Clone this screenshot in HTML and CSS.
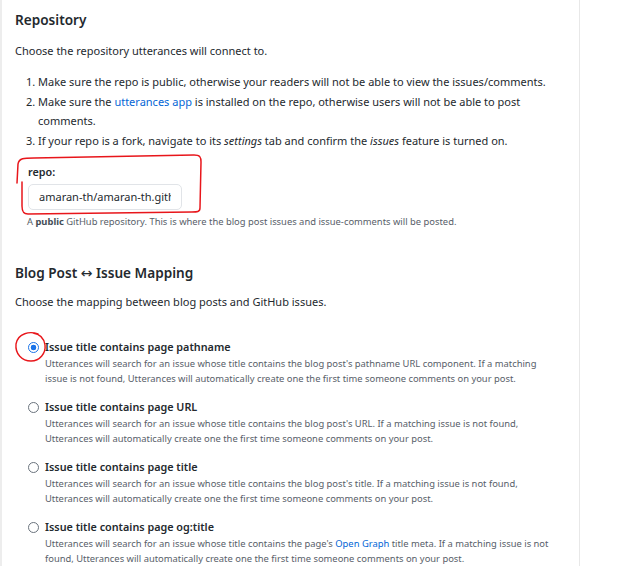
FILE: index.html
```html
<!DOCTYPE html>
<html>
<head>
<meta charset="utf-8">
<link rel="stylesheet" href="styles.css">
</head>
<body>
<div class="page">
  <h3 class="heading">Repository</h3>
  <p class="lead">Choose the repository utterances will connect to.</p>
  <ol class="steps">
    <li>Make sure the repo is public, otherwise your readers will not be able to view the issues/comments.</li>
    <li>Make sure the <a href="#">utterances app</a> is installed on the repo, otherwise users will not be able to post comments.</li>
    <li>If your repo is a fork, navigate to its <em>settings</em> tab and confirm the <em>issues</em> feature is turned on.</li>
  </ol>
  <div class="repo-field">
    <label class="field-label">repo:</label>
    <div class="input"><span class="input-text">amaran-th/amaran-th.github.io</span></div>
  </div>
  <p class="note">A <strong>public</strong> GitHub repository. This is where the blog post issues and issue-comments will be posted.</p>

  <h3 class="heading heading-2">Blog Post <span class="arrow">↔</span> Issue Mapping</h3>
  <p class="lead lead-2">Choose the mapping between blog posts and GitHub issues.</p>

  <div class="options">
    <div class="option">
      <span class="radio checked"></span>
      <div class="option-body">
        <div class="option-title">Issue title contains page pathname</div>
        <div class="option-desc">Utterances will search for an issue whose title contains the blog post's pathname URL component. If a matching issue is not found, Utterances will automatically create one the first time someone comments on your post.</div>
      </div>
    </div>
    <div class="option">
      <span class="radio"></span>
      <div class="option-body">
        <div class="option-title">Issue title contains page URL</div>
        <div class="option-desc">Utterances will search for an issue whose title contains the blog post's URL. If a matching issue is not found, Utterances will automatically create one the first time someone comments on your post.</div>
      </div>
    </div>
    <div class="option">
      <span class="radio"></span>
      <div class="option-body">
        <div class="option-title">Issue title contains page title</div>
        <div class="option-desc">Utterances will search for an issue whose title contains the blog post's title. If a matching issue is not found, Utterances will automatically create one the first time someone comments on your post.</div>
      </div>
    </div>
    <div class="option">
      <span class="radio"></span>
      <div class="option-body">
        <div class="option-title">Issue title contains page og:title</div>
        <div class="option-desc">Utterances will search for an issue whose title contains the page's <a href="#">Open Graph</a> title meta. If a matching issue is not found, Utterances will automatically create one the first time someone comments on your post.</div>
      </div>
    </div>
  </div>

  <svg class="scribble" width="192" height="70" viewBox="0 0 192 70">
    <path d="M3 33 L4 14 C5 8, 10 8, 20 8 L180 5 C186 5, 187 7, 187 12 L186 58 C186 62, 183 62, 178 62 L14 64 C9 64, 8 61, 8 56 L8 32" fill="none" stroke="#e8161b" stroke-width="1.5" stroke-linecap="round" stroke-linejoin="round"/>
  </svg>
  <svg class="circle-mark" width="36" height="34" viewBox="0 0 36 34">
    <path d="M26 4 C18 1, 6 3, 4 14 C3 24, 10 31, 19 31 C28 31, 34 23, 33 15 C32 8, 28 4, 21 3" fill="none" stroke="#e8161b" stroke-width="1.4" stroke-linecap="round"/>
  </svg>
</div>
</body>
</html>
```
FILE: styles.css
```css
html, body {
  margin: 0;
  padding: 0;
  background: #fff;
  overflow: hidden;
}
body {
  font-family: "Noto Sans", "Open Sans", sans-serif;
  color: #24292e;
  font-size: 11px;
}
.page {
  position: relative;
  width: 550px;
  height: 566px;
  border-left: 2px solid #ededed;
  border-right: 1px solid #e8e8e8;
  padding-left: 13px;
  padding-right: 14px;
  box-sizing: content-box;
}
.heading {
  margin: 0;
  padding-top: 10px;
  font-size: 13.6px;
  font-weight: 600;
  line-height: 20px;
}
.heading-2 {
  padding-top: 34.5px;
}
.arrow {
  font-family: "DejaVu Sans", sans-serif;
  font-weight: 400;
  font-size: 14px;
  line-height: 0;
}
.lead {
  margin: 11px 0 0;
  line-height: 20px;
}
.lead-2 {
  margin-top: 9px;
}
.steps {
  margin: 11px 0 0;
  padding-left: 23px;
  line-height: 19.5px;
}
a {
  color: #0366d6;
  text-decoration: none;
}
.repo-field {
  margin: 14px 0 0 13px;
  display: flex;
  flex-direction: column;
  gap: 4px;
}
.field-label {
  font-weight: 600;
  font-size: 10.8px;
  line-height: 16px;
}
.input {
  width: 154px;
  height: 26px;
  box-sizing: border-box;
  border: 1px solid #e1e4e8;
  border-radius: 5px;
  padding: 0 10px;
  line-height: 24px;
  font-size: 11px;
  color: #24292e;
}
.input-text {
  display: block;
  white-space: nowrap;
  overflow: hidden;
}
.note {
  margin: 3.5px 0 0 12px;
  font-size: 9.4px;
  color: #586069;
  line-height: 15px;
}
.note strong {
  color: #444d56;
}
.options {
  margin-top: 26px;
  display: flex;
  flex-direction: column;
  gap: 12px;
}
.option {
  display: flex;
  align-items: flex-start;
  gap: 6px;
  padding-left: 13px;
}
.radio {
  width: 9px;
  height: 9px;
  border: 1px solid #6a737d;
  border-radius: 50%;
  margin-top: 3.5px;
  flex: none;
  box-sizing: content-box;
}
.radio.checked {
  border-color: #1a73e8;
  background: radial-gradient(circle, #1a73e8 0 2.6px, #fff 3.1px);
}
.option-body {
  width: 515px;
}
.option-title {
  font-weight: 600;
  font-size: 10.8px;
  line-height: 18px;
}
.option-desc {
  font-size: 9.4px;
  color: #586069;
  line-height: 15px;
}
.scribble {
  position: absolute;
  left: 12px;
  top: 150px;
}
.circle-mark {
  position: absolute;
  left: 10px;
  top: 330px;
}
```
